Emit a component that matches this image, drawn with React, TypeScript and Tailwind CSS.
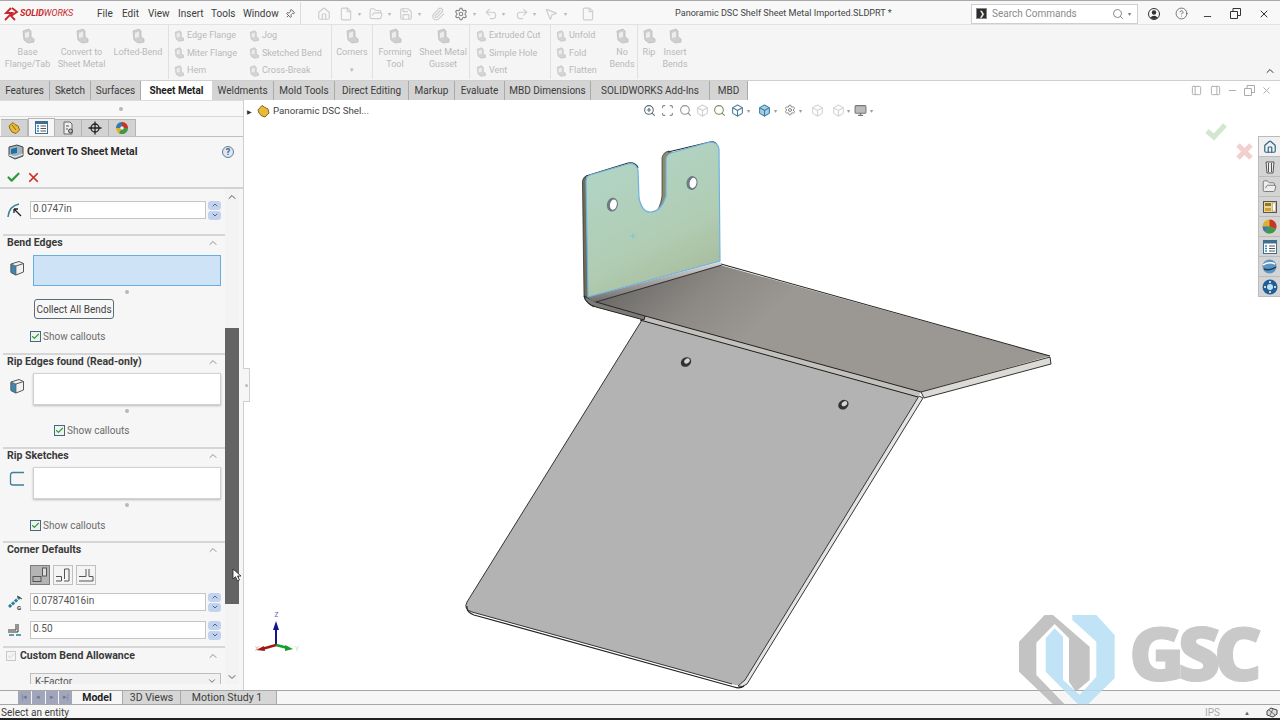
import React from "react";
import { File, FolderOpen, Save, Settings, Undo2, Redo2, MousePointer2, Pin, Search, ChevronUp, ChevronDown, CircleHelp, Minus, X, Check, ZoomIn, Scan, Monitor, Box, Home, Paperclip, PanelLeft, PanelRight } from "lucide-react";

const Metal = ({ c = "#cfcfcf", s = 16 }: { c?: string; s?: number }) => (
  <svg width={s} height={s} viewBox="0 0 16 16" className="shrink-0">
    <path d="M3 3 L9 1 L11 3 V9 L14 11 V14 L8 15 L4 12 Z" fill={c} stroke="#bdbdbd" strokeWidth="0.8" />
    <path d="M5 5 L9 3.5 V9 L5 10 Z" fill="#ededed" />
  </svg>
);

const Big = ({ w, l1, l2, caret }: { w: number; l1: string; l2?: string; caret?: boolean }) => (
  <div className="flex flex-col items-center shrink-0 pt-[3px] text-[9px] leading-[12px] text-[#b9b9b9] whitespace-nowrap" style={{ width: w }}>
    <Metal />
    <div className="mt-[2px]">{l1}</div>
    {l2 && <div>{l2}</div>}
    {caret && <div className="text-[7px] leading-[8px] mt-[8px]">▾</div>}
  </div>
);

const Small = ({ w, pl, items }: { w: number; pl: number; items: string[] }) => (
  <div className="flex flex-col shrink-0 pt-[4px] gap-[4px] text-[9px] leading-[13.5px] text-[#b9b9b9]" style={{ width: w, paddingLeft: pl }}>
    {items.map((t) => (
      <div key={t} className="flex items-center gap-[2px] whitespace-nowrap">
        <Metal s={12} c="#d4d4d4" />
        <span>{t}</span>
      </div>
    ))}
  </div>
);

const Sep = () => <div className="w-px h-[54px] bg-[#e0e0e0] shrink-0" />;

const Caret = ({ ml }: { ml: number }) => <span className="text-[6px] text-[#b5b5b5] shrink-0" style={{ marginLeft: ml }}>▾</span>;

const tabs: [string, number][] = [
  ["Features", 50], ["Sketch", 41], ["Surfaces", 50], ["Sheet Metal", 71], ["Weldments", 62], ["Mold Tools", 61],
  ["Direct Editing", 74], ["Markup", 46], ["Evaluate", 50], ["MBD Dimensions", 86], ["SOLIDWORKS Add-Ins", 119], ["MBD", 38],
];

const Header = ({ t, chk }: { t: string; chk?: boolean }) => (
  <div className="h-[14px] flex items-center justify-between pl-[7px] pr-[6px] text-[10.5px] font-bold text-[#3a3a3a] leading-[12px]">
    <div className="flex items-center gap-[4px]">
      {chk && (
        <div className="w-[10px] h-[10px] -ml-px border border-[#c9c9c9] bg-[#f4f4f4] flex items-center justify-center">
          <Check size={8} color="#c4c4c4" strokeWidth={2} />
        </div>
      )}
      <span>{t}</span>
    </div>
    <ChevronUp size={12} color="#6d6d6d" strokeWidth={1.5} />
  </div>
);

const Divider = ({ mt }: { mt: number }) => <div className="h-[2px] bg-[#d6d6d6] ml-[3px]" style={{ marginTop: mt }} />;

const Dot = () => (
  <div className="h-[4px] mt-[4px] pl-[125px]">
    <div className="w-[4px] h-[4px] rounded-full bg-[#b8b8b8]" />
  </div>
);

const Callout = ({ x, mt }: { x: number; mt: number }) => (
  <div className="h-[11px] flex items-center gap-[2px] text-[10px] text-[#6c6c6c]" style={{ paddingLeft: x, marginTop: mt }}>
    <div className="w-[11px] h-[11px] border border-[#47677f] bg-[#eef3ee] flex items-center justify-center">
      <Check size={9} color="#2f9a3c" strokeWidth={3} />
    </div>
    <span>Show callouts</span>
  </div>
);

const CubeIcon = () => (
  <svg width="16" height="16" viewBox="0 0 16 16" className="ml-[9px] mt-[5px] shrink-0">
    <path d="M2 4 L10 1.5 L14.5 3.5 V12 L7 15 L2 12.5 Z" fill="#f2f2f2" stroke="#585858" />
    <path d="M2 4 L7 6 V15 L2 12.5 Z" fill="#3f87b0" stroke="#585858" strokeWidth=".7" />
    <path d="M7 6 L14.5 3.5" stroke="#585858" />
  </svg>
);

const Box2 = ({ active, icon }: { active?: boolean; icon: React.ReactNode }) => (
  <div className={active ? "flex mt-[5px] h-[31px]" : "flex mt-[4px] h-[32px]"}>
    <div className="w-[33px] shrink-0">{icon}</div>
    <div className={active ? "w-[188px] h-[31px] bg-[#cfe3f7] border border-[#66aee0]" : "w-[188px] h-[32px] bg-white border border-[#d2d2d2] shadow-[0_1px_2px_#bbb]"} />
  </div>
);

const Spin = () => (
  <div className="flex flex-col gap-[1px] ml-[2px] w-[13px]">
    <div className="h-[9px] rounded-[3px] bg-[#c3d3ee] flex items-center justify-center"><ChevronUp size={8} color="#33557f" strokeWidth={2.5} /></div>
    <div className="h-[9px] rounded-[3px] bg-[#c3d3ee] flex items-center justify-center"><ChevronDown size={8} color="#33557f" strokeWidth={2.5} /></div>
  </div>
);

const Field = ({ v, icon, mt }: { v: string; icon: React.ReactNode; mt: number }) => (
  <div className="flex h-[18px] items-center" style={{ marginTop: mt }}>
    <div className="w-[30px] shrink-0 flex justify-center">{icon}</div>
    <div className="w-[176px] h-[18px] bg-white border border-[#c4c4c4] pl-[2px] text-[10px] leading-[14px] text-[#555]">{v}</div>
    <Spin />
  </div>
);

const TabShell = ({ a, children }: { a?: boolean; children: React.ReactNode }) => (
  <div className={a ? "w-[27px] h-[18px] bg-[#f6f6f6] border-x border-t border-[#b5b5b5] flex items-center justify-center" : "w-[27px] h-[17px] bg-[#d2d2d2] border-r border-t border-[#b5b5b5] flex items-center justify-center"}>
    {children}
  </div>
);

const Pane = ({ a, children }: { a?: boolean; children: React.ReactNode }) => (
  <div className={a ? "h-[20px] bg-[#f0f0f0] border-b border-[#bbb] flex items-center justify-center" : "h-[20px] bg-[#d4d4d4] border-b border-[#bbb] flex items-center justify-center"}>
    {children}
  </div>
);

const Grad = () => (
  <defs>
    <linearGradient id="green" x1="0.3" y1="0" x2="0.75" y2="1">
      <stop offset="0" stopColor="#b2d5c6" />
      <stop offset="0.6" stopColor="#b0cdb4" />
      <stop offset="1" stopColor="#a8b998" />
    </linearGradient>
    <linearGradient id="shelf" gradientUnits="userSpaceOnUse" x1="640" y1="270" x2="720" y2="360">
      <stop offset="0" stopColor="#6f6d6a" />
      <stop offset="0.5" stopColor="#8c8985" />
      <stop offset="1" stopColor="#9b9893" />
    </linearGradient>
    <linearGradient id="bend" x1="0.55" y1="0" x2="0.6" y2="1">
      <stop offset="0" stopColor="#d9d9d9" />
      <stop offset="1" stopColor="#6c6a68" />
    </linearGradient>
  </defs>
);

const Model = () => (
  <svg className="absolute inset-0" width="1036" height="590" viewBox="244 100 1036 590">
    <Grad />
    <path d="M1207 131 L1214 137 L1225 125" fill="none" stroke="#d3e6cf" strokeWidth="5" />
    <path d="M1238 145 L1251 158 M1251 145 L1238 158" fill="none" stroke="#f4cfcf" strokeWidth="5" />
    {/* flange thickness */}
    <path d="M586 176 Q582 178 582.500 184 L584 296 Q585 303 594 307 L600 296 Z" fill="#6e6d58" stroke="#222" strokeWidth=".7" />
    <path d="M654 213 Q660 210 662 196 L662 158 Q663 152 669 151 L674 155 L668 200 Z" fill="#8d8a68" stroke="#333" strokeWidth=".7" />
    <path d="M586 176 L628 163 Q636 162 638 168" fill="none" stroke="#2d2d2d" strokeWidth="1.2" />
    <path d="M668 152 L710 142 Q716 141 717 146" fill="none" stroke="#2d2d2d" strokeWidth="1.2" />
    {/* shelf */}
    <path d="M720 265 L1050 356 L921 392 L645 316 L596 302 Z" fill="url(#shelf)" />
    <path d="M921 392 L1050 357 L1051 364 L924 398 Z" fill="#dcdad5" stroke="#1d1d1d" strokeWidth=".9" strokeLinejoin="round" />
    <path d="M721 264 L1050 356" stroke="#222" strokeWidth="1.1" fill="none" />
    {/* panel */}
    <path d="M642 320 L919 396 L745 680 Q740 688 732 684 L472 612 Q464 608 467 602 Z" fill="#b3b3b3" />
    <path d="M919 396 L923 398 L747 684 Q742 688 738 686 L745 680 Z" fill="#e4e4e4" stroke="#222" strokeWidth=".9" strokeLinejoin="round" />
    <path d="M642 320 L467 602 Q463 609 472 612 L732 684" fill="none" stroke="#333" strokeWidth="1" />
    <path d="M467 606 Q466 612 474 615 L734 687 Q740 689 744 686" fill="none" stroke="#222" strokeWidth="1.200" />
    <path d="M645 316 L921 392 L918 397 L640 320 Z" fill="#c3c1bc" />
    <path d="M645 316 L921 392" stroke="#1d1d1d" strokeWidth="1" fill="none" />
    <path d="M640 320 L918 397" stroke="#1d1d1d" strokeWidth="1" fill="none" />
    <path d="M584 296 Q586 304 596 307 L644 320 L645 316 L596 302 Z" fill="#7c7a76" stroke="#222" strokeWidth="1" />
    <path d="M588 297 L720 262 L722 265 L596 302 Q590 301 588 297 Z" fill="url(#bend)" />
    <path d="M596 302 L722 265" stroke="#222" strokeWidth=".9" fill="none" />
    {/* green flange */}
    <path d="M586 181 Q586 177 590 175 L628 164 Q636 162 638 170 L639 198 Q642 212 650 212 Q661 212 666 196 L666 160 Q666 155 671 153 L710 142 Q718 142 719 149 L720 261 L588 297 Z" fill="url(#green)" stroke="#6db1e4" strokeWidth="1.200" />
    <ellipse cx="612.500" cy="204.500" rx="5.500" ry="7" transform="rotate(12 612 204)" fill="#6c7a82" />
    <ellipse cx="613.500" cy="204.500" rx="3.400" ry="5.200" transform="rotate(12 613 204)" fill="#fff" />
    <ellipse cx="692" cy="183" rx="5.500" ry="7" transform="rotate(12 692 183)" fill="#6c7a82" />
    <ellipse cx="693" cy="183" rx="3.400" ry="5.200" transform="rotate(12 693 183)" fill="#fff" />
    <path d="M633 233 V239 M630 236 H636" stroke="#7fbcd6" strokeWidth=".7" />
    {/* panel holes */}
    <ellipse cx="686" cy="362" rx="5.500" ry="4.500" transform="rotate(-35 686 362)" fill="#333" />
    <ellipse cx="687" cy="361" rx="3" ry="2.200" transform="rotate(-35 687 361)" fill="#d4d4d4" />
    <ellipse cx="843.500" cy="405" rx="5.500" ry="4.500" transform="rotate(-35 843 405)" fill="#333" />
    <ellipse cx="844.500" cy="404" rx="3" ry="2.200" transform="rotate(-35 844 404)" fill="#d4d4d4" />
    {/* triad */}
    <path d="M276 645 V628" stroke="#14148c" strokeWidth="2" />
    <path d="M276 621 L279 630 H273 Z" fill="#14148c" />
    <path d="M276 645 L262 649" stroke="#a11818" strokeWidth="2.500" />
    <path d="M256 650 L264 646 L265 651 Z" fill="#a11818" />
    <path d="M276 645 L288 648" stroke="#179c2e" strokeWidth="2.500" />
    <path d="M293 649 L285 645 L285 651 Z" fill="#179c2e" />
    <text x="274.500" y="617" fontSize="7" fill="#5c5cc4" fontFamily="Open Sans, sans-serif">Z</text>
    <text x="255" y="651" fontSize="7" fill="#e8a0a0" fontFamily="Open Sans, sans-serif">X</text>
    <text x="295" y="651" fontSize="7" fill="#a8dca8" fontFamily="Open Sans, sans-serif">Y</text>
  </svg>
);

const ToolIcon = ({ children, ml }: { children: React.ReactNode; ml: number }) => (
  <div className="shrink-0 flex items-center" style={{ marginLeft: ml }}>{children}</div>
);

export default function App() {
  const fc = "#cdcdcd";
  return (
    <div className="relative w-[1280px] h-[720px] overflow-hidden flex flex-col bg-white [font-family:'Roboto','Open_Sans',sans-serif]">
      {/* Title bar */}
      <div className="h-[25px] shrink-0 flex items-center pt-[2px] bg-[#f8f8f8] border-t border-[#a8a8a8] border-b border-b-[#e2e2e2] text-[10px] text-[#3c3c3c]">
        <div className="w-[97px] shrink-0 flex items-center pl-[3px]">
          <svg width="16" height="14" viewBox="0 0 16 14">
            <path d="M8 1 L3 6 L9 6 L2 13 M9 1 L14 5 L8 9 L12 13" fill="none" stroke="#c9252c" strokeWidth="1.800" />
          </svg>
          <span className="text-[9px] italic text-[#c9252c] ml-[1px] tracking-[-0.1px]"><b>SOLID</b>WORKS</span>
        </div>
        <span className="w-[25px]">File</span>
        <span className="w-[26px]">Edit</span>
        <span className="w-[30px]">View</span>
        <span className="w-[33px]">Insert</span>
        <span className="w-[32px]">Tools</span>
        <span className="w-[40px]">Window</span>
        <Pin size={10} color="#555" className="ml-[2px] rotate-45" />
        <div className="w-px h-[24px] bg-[#dcdcdc] ml-[5px]" />
        <ToolIcon ml={16}><Home size={14} color={fc} /></ToolIcon>
        <ToolIcon ml={8}><File size={14} color={fc} /></ToolIcon>
        <Caret ml={5} />
        <ToolIcon ml={8}><FolderOpen size={14} color={fc} /></ToolIcon>
        <Caret ml={5} />
        <ToolIcon ml={8}><Save size={14} color={fc} /></ToolIcon>
        <Caret ml={5} />
        <ToolIcon ml={10}><Paperclip size={14} color={fc} /></ToolIcon>
        <ToolIcon ml={9}><Settings size={14} color="#8a8a8a" /></ToolIcon>
        <Caret ml={5} />
        <ToolIcon ml={8}><Undo2 size={14} color={fc} /></ToolIcon>
        <Caret ml={4} />
        <ToolIcon ml={10}><Redo2 size={14} color={fc} /></ToolIcon>
        <Caret ml={4} />
        <ToolIcon ml={8}><MousePointer2 size={14} color={fc} /></ToolIcon>
        <Caret ml={6} />
        <ToolIcon ml={14}><File size={14} color={fc} /></ToolIcon>
        <span className="ml-[80px] w-[296px] text-[9.1px] text-[#444] whitespace-nowrap">Panoramic DSC Shelf Sheet Metal Imported.SLDPRT *</span>
        <div className="w-[167px] h-[20px] shrink-0 bg-white border border-[#cfcfcf] flex items-center pl-[4px]">
          <div className="w-[11px] h-[11px] bg-[#2d2d2d] text-white text-[7px] leading-[11px] text-center border border-[#888]">❯</div>
          <span className="ml-[5px] w-[120px] text-[#8a8a8a] text-[10px]">Search Commands</span>
          <Search size={12} color="#888" />
          <span className="ml-[4px] text-[6px] text-[#777]">▾</span>
        </div>
        <svg width="12" height="12" viewBox="0 0 12 12" className="ml-[10px]">
          <circle cx="6" cy="6" r="5.500" fill="none" stroke="#333" />
          <circle cx="6" cy="4.500" r="2.200" fill="#333" />
          <path d="M2 10 Q6 5.500 10 10 Q6 12 2 10" fill="#333" />
        </svg>
        <CircleHelp size={13} color="#444" className="ml-[15px]" strokeWidth={1.300} />
        <Minus size={11} color="#333" className="ml-[14px] mt-[5px]" />
        <svg width="11" height="11" viewBox="0 0 11 11" className="ml-[17px]"><path d="M.5 3.500 H7.500 V10.500 H.5 Z M3 3.500 V.5 H10.500 V7.500 H7.500" fill="none" stroke="#333" /></svg>
        <X size={12} color="#333" className="ml-[17px]" />
      </div>

      {/* Ribbon */}
      <div className="h-[55px] shrink-0 flex bg-[#f5f5f5] relative">
        <Big w={55} l1="Base" l2="Flange/Tab" />
        <Big w={53} l1="Convert to" l2="Sheet Metal" />
        <Big w={60} l1="Lofted-Bend" />
        <Sep />
        <Small w={76} pl={4} items={["Edge Flange", "Miter Flange", "Hem"]} />
        <Small w={86} pl={3} items={["Jog", "Sketched Bend", "Cross-Break"]} />
        <Sep />
        <Big w={40} l1="Corners" caret />
        <Sep />
        <Big w={44} l1="Forming" l2="Tool" />
        <Big w={52} l1="Sheet Metal" l2="Gusset" />
        <Sep />
        <Small w={80} pl={5} items={["Extruded Cut", "Simple Hole", "Vent"]} />
        <Sep />
        <Small w={56} pl={4} items={["Unfold", "Fold", "Flatten"]} />
        <Big w={30} l1="No" l2="Bends" />
        <Sep />
        <Big w={22} l1="Rip" />
        <Big w={30} l1="Insert" l2="Bends" />
        <div className="ml-auto mr-[4px] self-end mb-[3px]"><ChevronUp size={12} color="#333" /></div>
      </div>

      {/* Command tabs */}
      <div className="h-[20px] shrink-0 flex bg-white border-t border-[#cfcfcf]">
        {tabs.map(([t, w]) => (
          <div key={t} style={{ width: w }} className={t === "Sheet Metal" ? "flex items-center justify-center bg-white font-bold text-[10px] text-[#222] whitespace-nowrap" : "flex items-center justify-center bg-[#d4d4d4] border-r border-[#aaa] text-[10px] text-[#3c3c3c] whitespace-nowrap"}>{t}</div>
        ))}
      </div>

      {/* Main */}
      <div className="flex-1 flex min-h-0">
        {/* Property manager */}
        <div className="w-[244px] shrink-0 flex flex-col bg-[#f6f6f6] border-r border-[#cfcfcf]">
          <div className="h-[17px] border-t border-[#dcdcdc] bg-[#f8f8f8] border-b border-b-[#d8d8d8] flex items-center pl-[119px]">
            <div className="w-[4px] h-[4px] rounded-full bg-[#b8b8b8]" />
          </div>
          <div className="h-[20px] flex items-end pl-[1px] pt-[2px] border-b border-[#c0c0c0]">
            <TabShell>
              <svg width="14" height="14" viewBox="0 0 14 14"><path d="M2 5 L6 1.500 L8 3.500 L11 5 L12.500 9 L9 12.500 L5 11 L3 8 Z" fill="#e9b93a" stroke="#8a6a14" /><path d="M5 4 L9 9" stroke="#8a6a14" /></svg>
            </TabShell>
            <TabShell a>
              <svg width="13" height="13" viewBox="0 0 13 13"><rect x=".5" y=".5" width="12" height="12" fill="#fff" stroke="#3f6f8f" /><rect x=".5" y=".5" width="12" height="2.500" fill="#3f6f8f" /><path d="M2 5 H4 M2 7.500 H4 M2 10 H4" stroke="#2b8fbe" strokeWidth="1.300" /><path d="M5.500 5 H11 M5.500 7.500 H11 M5.500 10 H11" stroke="#555" /></svg>
            </TabShell>
            <TabShell>
              <svg width="13" height="14" viewBox="0 0 13 14"><path d="M2 1 H8 L10 3 V13 H2 Z" fill="#eee" stroke="#666" /><path d="M4 5 H7 M4 8 H6" stroke="#555" /><circle cx="8.500" cy="10" r="2" fill="#bbb" stroke="#444" /></svg>
            </TabShell>
            <TabShell>
              <svg width="14" height="14" viewBox="0 0 14 14"><circle cx="7" cy="7" r="4" fill="none" stroke="#222" strokeWidth="1.300" /><path d="M7 .5 V13.500 M.5 7 H13.500" stroke="#222" strokeWidth="1.300" /></svg>
            </TabShell>
            <TabShell>
              <svg width="14" height="14" viewBox="0 0 14 14"><circle cx="7" cy="7" r="6" fill="#e2b020" /><path d="M7 7 L7 1 A6 6 0 0 1 13 7 Z" fill="#c8342c" /><path d="M7 7 L13 7 A6 6 0 0 1 4 12.200 Z" fill="#3d9a4a" /><path d="M7 7 L1 7 A6 6 0 0 1 7 1 Z" fill="#3478b8" /><circle cx="7" cy="7" r="1.800" fill="#eee" /></svg>
            </TabShell>
          </div>
          <div className="h-[31px] flex items-center pl-[8px] pr-[9px] mt-[-1px]">
            <svg width="16" height="16" viewBox="0 0 16 16"><path d="M1 3 L9 1 L15 3 V12 L7 15 L1 12 Z" fill="#9fb4c0" stroke="#444" /><path d="M3 5 L9 3.500 V9 L3 10 Z" fill="#1f6f9e" /><path d="M1 11 L7 13 L15 10" stroke="#eee" fill="none" /></svg>
            <span className="ml-[3px] text-[10.5px] font-bold text-[#2a2a2a] flex-1 whitespace-nowrap">Convert To Sheet Metal</span>
            <div className="w-[12px] h-[12px] rounded-full border border-[#5d7f9a] bg-[#dfe8f0] text-[9px] leading-[10px] text-center font-bold text-[#3c6482]">?</div>
          </div>
          <div className="h-[20px] flex items-center pl-[6px] gap-[5px]">
            <Check size={15} color="#2e9a3b" strokeWidth={3.500} />
            <X size={15} color="#cf2e22" strokeWidth={2.800} />
          </div>
          <div className="h-[2px] bg-[#d3d3d3] mt-[0px] shrink-0" />
          <div className="h-[495px] flex overflow-hidden">
            <div className="w-[225px] shrink-0">
              <Field mt={12} v="0.0747in" icon={
                <svg width="17" height="16" viewBox="0 0 17 16"><path d="M1 15 Q2 4 12 2" fill="none" stroke="#3c8098" strokeWidth="1.500" /><path d="M14 14 L7 7 M7 7 L7 11 M7 7 L11 7" stroke="#222" strokeWidth="1.300" fill="none" /></svg>
              } />
              <Divider mt={15} />
              <Header t="Bend Edges" />
              <Box2 active icon={<CubeIcon />} />
              <Dot />
              <div className="mt-[5px] ml-[34px] w-[80px] h-[20px] rounded-[3px] border border-[#5d6d75] bg-[#f7f7f7] flex items-center justify-center text-[10px] text-[#444] whitespace-nowrap">Collect All Bends</div>
              <Callout x={30} mt={12} />
              <Divider mt={11} />
              <Header t="Rip Edges found (Read-only)" />
              <Box2 icon={<CubeIcon />} />
              <Dot />
              <Callout x={54} mt={12} />
              <Divider mt={11} />
              <Header t="Rip Sketches" />
              <Box2 icon={
                <svg width="16" height="16" viewBox="0 0 16 16" className="ml-[9px] mt-[4px]"><path d="M15 1.500 H4 Q1.500 1.500 1.500 4 V12 Q1.500 14 4 14 H15" fill="none" stroke="#3e7f9b" strokeWidth="1.300" /></svg>
              } />
              <Dot />
              <Callout x={30} mt={13} />
              <Divider mt={10} />
              <Header t="Corner Defaults" />
              <div className="flex mt-[8px] ml-[30px] gap-[3px]">
                {[0, 1, 2].map((i) => (
                  <div key={i} className={i === 0 ? "w-[20px] h-[20px] bg-[#b4b4b4] border border-[#7c7c7c] flex items-center justify-center" : "w-[20px] h-[20px] bg-[#f4f4f4] border border-[#c0c0c0] flex items-center justify-center"}>
                    {i === 0 ? (
                      <svg width="16" height="16" viewBox="0 0 16 16"><rect x="1" y="9.500" width="8" height="5" fill="none" stroke="#555" /><rect x="10.500" y="1" width="4" height="8" fill="#ddd" stroke="#555" /></svg>
                    ) : i === 1 ? (
                      <svg width="16" height="16" viewBox="0 0 16 16"><path d="M1 9.500 H6.500 V14 H1 M9 14 H14 V2 H9.500 V12" fill="none" stroke="#555" /></svg>
                    ) : (
                      <svg width="16" height="16" viewBox="0 0 16 16"><path d="M1 9.500 H8 V2 M11 2 V9.500 H15 V14 H1" fill="none" stroke="#555" /></svg>
                    )}
                  </div>
                ))}
              </div>
              <Field mt={8} v="0.07874016in" icon={
                <svg width="16" height="16" viewBox="0 0 16 16"><path d="M2 13 L13 3" stroke="#2f7f9b" strokeWidth="3" strokeDasharray="3 1" /><path d="M10 2 L15 5" stroke="#444" /><text x="10" y="15.500" fontSize="6" fontWeight="700" fill="#333">G</text></svg>
              } />
              <Field mt={10} v="0.50" icon={
                <svg width="16" height="16" viewBox="0 0 16 16"><path d="M1 8 H9 V2 M11 2 V10 H1" fill="none" stroke="#333" /><path d="M2 13 H7 M9 13 H14" stroke="#2f7f9b" strokeWidth="1.300" /></svg>
              } />
              <Divider mt={7} />
              <div className="mt-px"><Header t="Custom Bend Allowance" chk /></div>
              <div className="mt-[10px] ml-[30px] w-[191px] h-[18px] border border-[#bdbdbd] bg-[#f1f1f1] flex items-start justify-between pl-[4px] pr-[3px] text-[10px] text-[#555]">
                <span>K-Factor</span>
                <ChevronDown size={10} color="#555" className="mt-[2px]" />
              </div>
            </div>
            <div className="w-[14px] shrink-0 relative bg-[#f3f3f3] ml-0">
              <ChevronUp size={12} color="#555" className="ml-px mt-[2px]" />
              <div className="absolute left-0 top-[139px] w-[14px] h-[276px] bg-[#646464]" />
              <ChevronDown size={12} color="#555" className="absolute left-px top-[482px]" />
            </div>
          </div>
        </div>

        {/* Graphics area */}
        <div className="flex-1 relative bg-white">
          <Model />
          <div className="absolute left-[-1px] top-[268px] w-[7px] h-[34px] bg-[#f6f6f6] border border-l-0 border-[#cfcfcf] flex items-center justify-center">
            <div className="w-[3px] h-[3px] rounded-full bg-[#bbb]" />
          </div>
          <div className="absolute left-[3px] top-[4px] flex items-center text-[9.7px] text-[#444] whitespace-nowrap">
            <span className="text-[6px] text-[#333] w-[9px]">▶</span>
            <svg width="14" height="14" viewBox="0 0 14 14"><path d="M2 6 L6 1.500 L9 3.500 L12 5 L13 9 L9 13 L5 11.500 L3 9 Z" fill="#e9b93a" stroke="#8a6a14" /></svg>
            <span className="ml-[3px]">Panoramic DSC Shel...</span>
          </div>
          <div className="absolute left-[399px] top-[3px] flex items-center h-[14px]">
            <ZoomIn size={13} color="#5c6f7c" />
            <Scan size={13} color="#7b8a94" className="ml-[5px]" />
            <Search size={13} color="#8a949c" className="ml-[5px]" />
            <Box size={13} color="#cfcfcf" className="ml-[4px]" />
            <Search size={13} color="#7c8f60" className="ml-[4px]" />
            <Box size={13} color="#4c7c9a" className="ml-[5px]" />
            <span className="text-[6px] text-[#999] ml-[3px]">▾</span>
            <Box size={13} color="#3c7fa8" fill="#a8cfe4" className="ml-[8px]" />
            <span className="text-[6px] text-[#999] ml-[3px]">▾</span>
            <Settings size={12} color="#888" className="ml-[7px]" />
            <span className="text-[6px] text-[#999] ml-[3px]">▾</span>
            <Box size={13} color="#d4d4d4" className="ml-[9px]" />
            <Box size={13} color="#d4d4d4" className="ml-[8px]" />
            <span className="text-[6px] text-[#999] ml-[2px]">▾</span>
            <Monitor size={13} color="#777" fill="#bbb" className="ml-[4px]" />
            <span className="text-[6px] text-[#999] ml-[3px]">▾</span>
          </div>
          <div className="absolute right-[8px] top-[-15px] flex items-center gap-[6px]">
            <PanelLeft size={11} color="#aaa" />
            <PanelRight size={11} color="#aaa" className="ml-[2px]" />
            <Minus size={11} color="#aaa" />
            <svg width="11" height="11" viewBox="0 0 11 11"><path d="M.5 3.500 H7.500 V10.500 H.5 Z M3 3.500 V.5 H10.500 V7.500 H7.500" fill="none" stroke="#aaa" /></svg>
            <X size={11} color="#aaa" />
          </div>
          <div className="absolute right-0 top-[36px] w-[22px] border-l border-t border-[#bbb] flex flex-col">
            <Pane a><Home size={14} color="#2f6480" strokeWidth={2} /></Pane>
            <Pane><svg width="12" height="14" viewBox="0 0 12 14"><path d="M2 2 H10 L9 13 H3 Z" fill="#eee" stroke="#555" /><path d="M4.500 3 V12 M7.500 3 V12" stroke="#555" /></svg></Pane>
            <Pane><FolderOpen size={15} color="#666" fill="#eee" strokeWidth={1.300} /></Pane>
            <Pane><svg width="14" height="14" viewBox="0 0 14 14"><rect x=".5" y="1.500" width="13" height="11" fill="#f2d48a" stroke="#555" /><rect x="2" y="3" width="6" height="3" fill="#8a7a3a" /><rect x="2" y="8" width="6" height="3" fill="#caa23a" /><rect x="9.500" y="3" width="3" height="8" fill="#fff" stroke="#888" strokeWidth=".5" /></svg></Pane>
            <Pane><svg width="15" height="15" viewBox="0 0 15 15"><circle cx="7.500" cy="7.500" r="7" fill="#d9b42a" /><path d="M7.500 7.500 L7.500 .5 A7 7 0 0 1 14 10 Z" fill="#c8342c" /><path d="M7.500 7.500 L14 10 A7 7 0 0 1 3 13 Z" fill="#3d9a4a" /><path d="M7.500 7.500 L3 13 A7 7 0 0 1 .5 7.500 Z" fill="#3478b8" /></svg></Pane>
            <Pane><svg width="14" height="14" viewBox="0 0 14 14"><rect x=".5" y=".5" width="13" height="13" fill="#fff" stroke="#3f6f8f" /><rect x=".5" y=".5" width="13" height="3" fill="#3f6f8f" /><path d="M2 6 H4 M2 8.500 H4 M2 11 H4" stroke="#2b8fbe" strokeWidth="1.300" /><path d="M6 6 H12 M6 8.500 H12 M6 11 H12" stroke="#555" /></svg></Pane>
            <Pane><svg width="15" height="15" viewBox="0 0 15 15"><circle cx="7.500" cy="7.500" r="7" fill="#5c94c2" /><path d="M1 6 Q7 2 13 5" stroke="#fff" strokeWidth="1.500" fill="none" /><path d="M2 10 Q8 12 14 8" stroke="#1b3c5c" strokeWidth="1.500" fill="none" /></svg></Pane>
            <Pane><svg width="16" height="16" viewBox="0 0 16 16"><circle cx="8" cy="8" r="7.500" fill="#1e5f95" /><circle cx="8" cy="8" r="3" fill="#c4e0f4" /><circle cx="8" cy="3" r="1" fill="#fff" /><circle cx="3" cy="8" r="1" fill="#fff" /><circle cx="13" cy="8" r="1" fill="#fff" /><circle cx="8" cy="13" r="1" fill="#fff" /></svg></Pane>
          </div>
        </div>
      </div>

      {/* Bottom tabs */}
      <div className="h-[14px] shrink-0 flex items-stretch bg-[#f6f6f6] border-t border-[#a6a6a6] text-[10.5px] text-[#3c3c3c]">
        <div className="ml-[18px] w-[54px] flex gap-px text-[7px] text-[#6d7490]">
          {["|◂", "◂", "▸", "▸|"].map((s) => (
            <div key={s} className="flex-1 bg-[#a2a6ba] flex items-center justify-center leading-none">{s}</div>
          ))}
        </div>
        <div className="w-[50px] flex items-center justify-center font-bold text-[#222]">Model</div>
        <div className="w-[59px] flex items-center justify-center bg-[#d6d6d6] border-x border-[#aaa]">3D Views</div>
        <div className="w-[96px] flex items-center justify-center pr-[3px] bg-[#d6d6d6] border-r border-[#aaa]">Motion Study 1</div>
      </div>
      {/* Status */}
      <div className="h-[16px] shrink-0 flex items-center bg-[#f6f6f6] border-t border-[#a6a6a6] border-b-2 border-b-[#222] pl-px pt-[1px] text-[10px] text-[#3c3c3c]">
        <span>Select an entity</span>
        <span className="ml-auto text-[#aaa]">IPS</span>
        <span className="ml-[24px] text-[6px] text-[#666]">▲</span>
        <svg width="12" height="11" viewBox="0 0 12 11" className="ml-[16px] mr-[2px]"><path d="M1 4 L5 1 L11 3 L11 7 L7 10 L1 8 Z" fill="#ddd" stroke="#444" /><path d="M3 3 L9 8 M7 2 L4 8" stroke="#444" strokeWidth=".7" /></svg>
      </div>

      {/* Watermark */}
      <div className="absolute left-[1019px] top-[614px] w-[245px] h-[91px] pointer-events-none">
        <svg width="97" height="90" viewBox="58 45 291 270" className="absolute left-0 top-[1px]">
          <path d="M218 45 H290 L345 105 V235 L265 313 H235 L138 215 V115 L165 85 L190 110 V240 L240 285 L290 230 V125 L218 60 Z" fill="#b5def3" fillOpacity=".85" />
          <path d="M58 125 L135 45 H160 L270 140 V240 L228 275 L208 245 V115 L165 72 L110 128 V225 L195 313 H160 L58 215 Z" fill="#b8b8b8" fillOpacity=".85" />
        </svg>
        <div className="absolute left-[110px] top-[1px] text-[75px] leading-[75px] font-extrabold tracking-[-7px] text-[#c9c9c9] [font-family:'Open_Sans',sans-serif] [-webkit-text-stroke:1px_#c9c9c9] whitespace-nowrap">GSC</div>
      </div>

      {/* Cursor */}
      <svg width="10" height="14" viewBox="0 0 10 14" className="absolute left-[232px] top-[568px]">
        <path d="M1 1 V11 L3.500 8.700 L5.500 13 L7.500 12 L5.500 8 H9 Z" fill="#fff" stroke="#222" strokeWidth=".8" />
      </svg>
    </div>
  );
}
